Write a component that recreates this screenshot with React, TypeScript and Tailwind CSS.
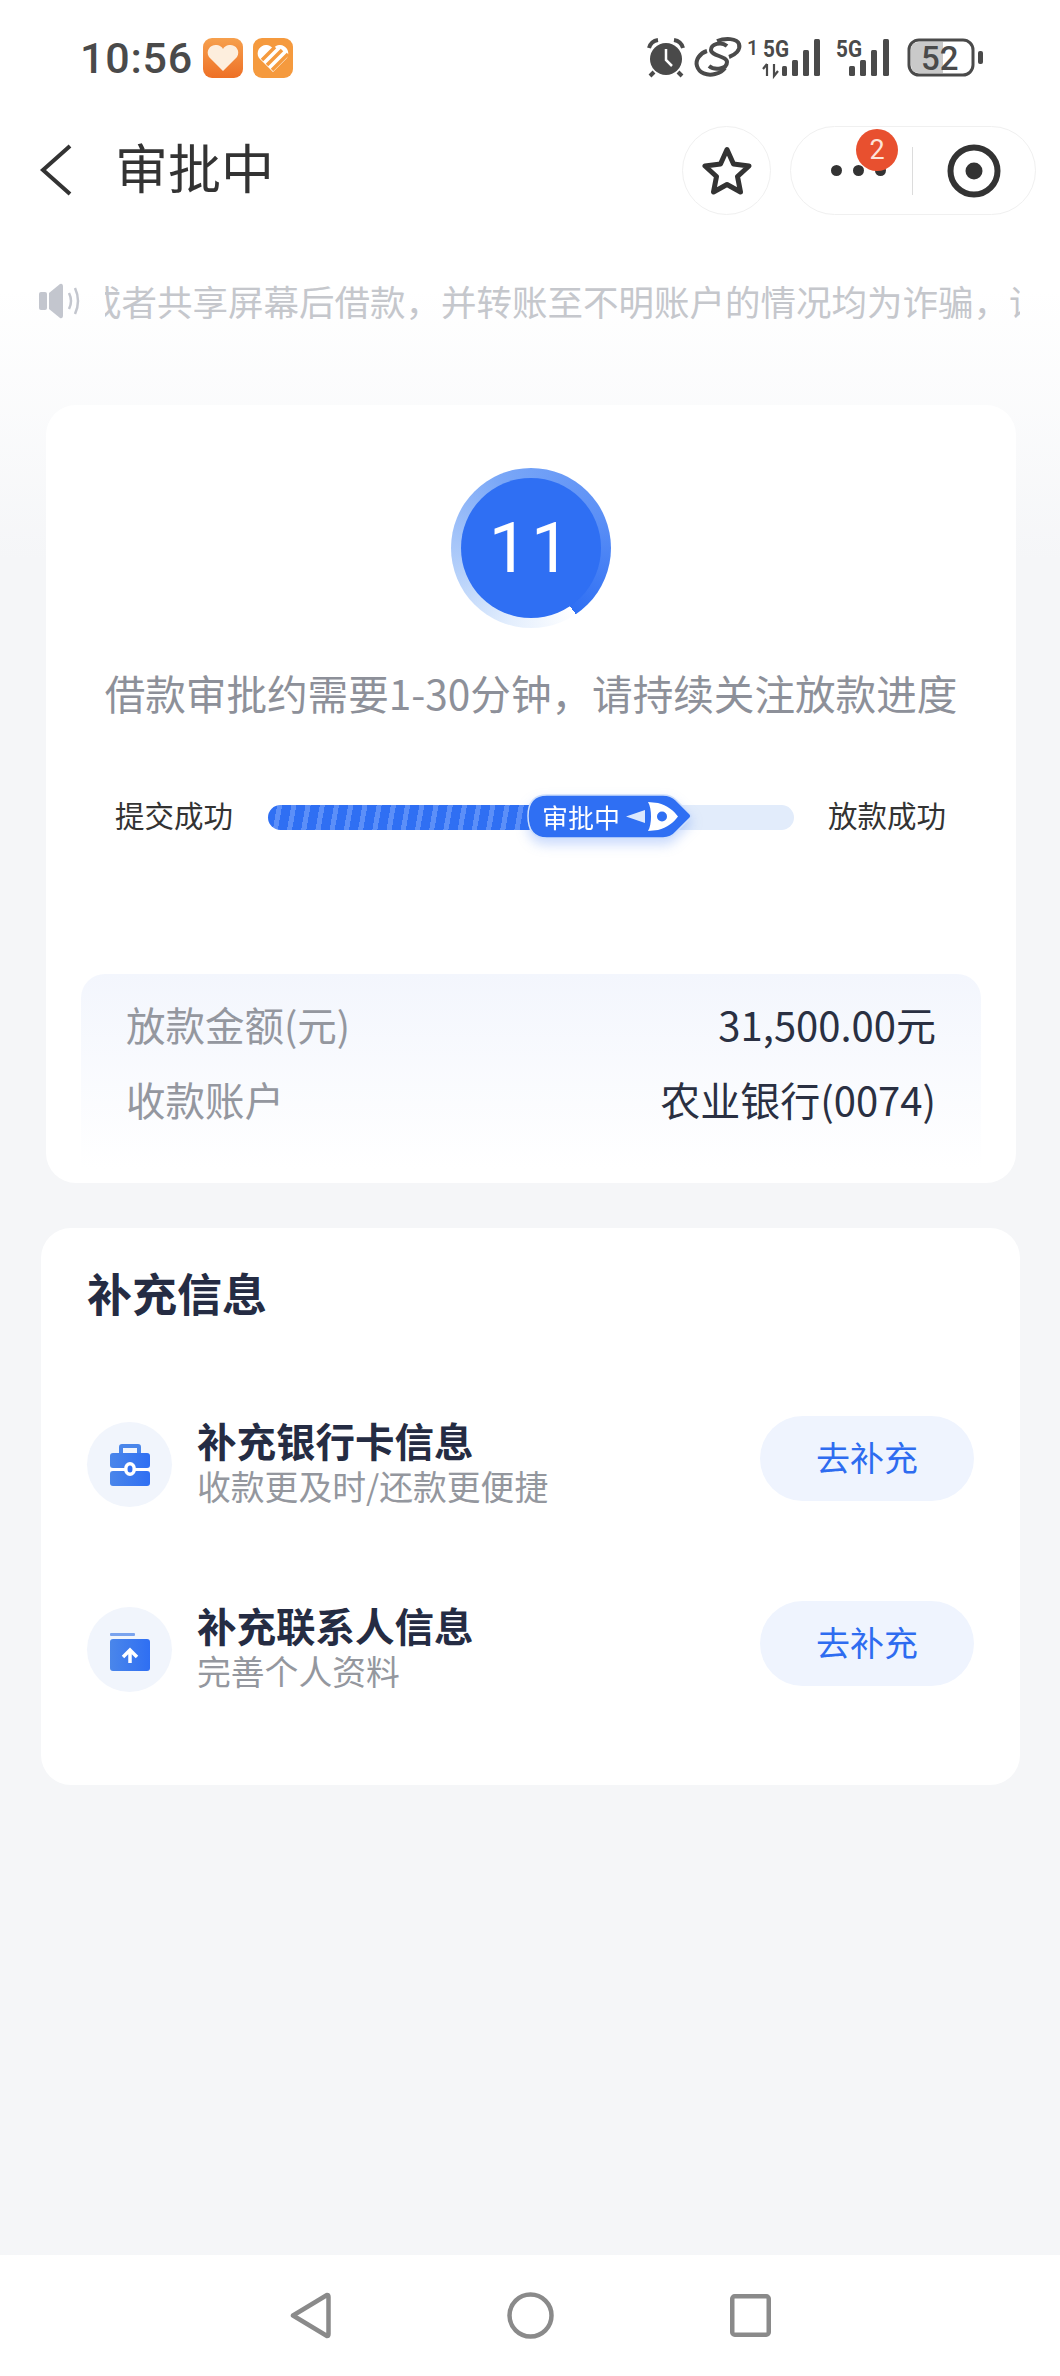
const CJK = "font-['Noto_Sans_CJK_SC','Noto_Sans',sans-serif]";

function HeartIcons() {
  return (
    <div className="flex gap-[10px] ml-[10px] mt-[2px]">
      <svg width="40" height="40" viewBox="0 0 40 40">
        <defs>
          <linearGradient id="o1" x1="0" y1="0" x2="0" y2="1"><stop offset="0" stopColor="#f6a04d" /><stop offset="1" stopColor="#ee7026" /></linearGradient>
        </defs>
        <rect width="40" height="40" rx="9" fill="url(#o1)" />
        <path d="M20 33 L6 19 C2 12 8 6 14 7 C17 7.500 19 9 20 11 C21 9 23 7.500 26 7 C32 6 38 12 34 19 Z" fill="#fdeedd" />
      </svg>
      <svg width="40" height="40" viewBox="0 0 40 40">
        <rect width="40" height="40" rx="9" fill="#f59a3e" />
        <path d="M20 34 L6 20 C2 13 8 6 14 7 C17 7.500 19 9 20 11 C21 9 23 7.500 26 7 C32 6 38 13 34 20 Z" fill="#fff" />
        <path d="M9 22 L22 9 M14 27 L29 12 M19 32 L35 16" stroke="#f59a3e" strokeWidth="3.500" />
      </svg>
    </div>
  );
}

function StatusIcons() {
  const c = "#4a4a4a";
  return (
    <svg width="340" height="44" viewBox="0 0 340 44" className="absolute left-[645px] top-[36px]">
      <circle cx="21" cy="23" r="16" fill={c} />
      <path d="M21 13 V24 L27 30" stroke="#fff" strokeWidth="2.500" fill="none" />
      <path d="M4 12 Q6 5 13 4 M38 12 Q36 5 29 4" stroke={c} strokeWidth="4" fill="none" />
      <path d="M9 36 L5 40 M33 36 L37 40" stroke={c} strokeWidth="4" />
      <path d="M82 10 C76 5 66 8 66 14 C66 20 82 20 82 26 C82 33 70 35 64 30" stroke={c} strokeWidth="4" fill="none" />
      <path d="M72 5 C80 2 92 2 94 8 C96 14 90 19 84 21" stroke={c} strokeWidth="4" fill="none" />
      <path d="M62 15 C55 17 50 24 52 30 C54 37 62 40 70 38 C74 37 78 35 80 32" stroke={c} strokeWidth="4" fill="none" />
      <text x="102" y="19" fontSize="20" fontWeight="500" fill={c} fontFamily="Roboto, sans-serif">1</text>
      <text x="118" y="21" fontSize="23" fontWeight="700" fill={c} fontFamily="Roboto, sans-serif" textLength="26" lengthAdjust="spacingAndGlyphs">5G</text>
      <path d="M122 28 V40 M118 33 L122 28 M129 28 V40 L133 35" stroke={c} strokeWidth="2.200" fill="none" />
      <rect x="137" y="30" width="5" height="10" rx="1.500" fill={c} />
      <rect x="147" y="24" width="6" height="16" rx="1.500" fill={c} />
      <rect x="158" y="14" width="6" height="26" rx="1.500" fill={c} />
      <rect x="169" y="3" width="6" height="37" rx="1.500" fill={c} />
      <text x="191" y="21" fontSize="23" fontWeight="700" fill={c} fontFamily="Roboto, sans-serif" textLength="26" lengthAdjust="spacingAndGlyphs">5G</text>
      <rect x="204" y="30" width="6" height="10" rx="1.500" fill={c} />
      <rect x="215" y="24" width="6" height="16" rx="1.500" fill={c} />
      <rect x="226" y="14" width="6" height="26" rx="1.500" fill={c} />
      <rect x="238" y="3" width="6" height="37" rx="1.500" fill={c} />
      <rect x="264" y="4" width="64" height="35" rx="10" fill="none" stroke={c} strokeWidth="3" />
      <path d="M266 14 Q266 6 274 6 H298 V37 H274 Q266 37 266 29 Z" fill="#c9c9c9" />
      <text x="276" y="34" fontSize="33" fontWeight="500" fill={c} fontFamily="Roboto, sans-serif">52</text>
      <rect x="333" y="15" width="5" height="13" rx="2" fill={c} />
    </svg>
  );
}

function Ring() {
  return (
    <div className="w-[160px] h-[160px] rounded-full bg-[conic-gradient(from_146deg,#ffffff_0deg,#e3eefd_50deg,#b9d3fa_100deg,#7aa7f7_190deg,#5c90f6_280deg,#2f6ff3_360deg)] flex items-center justify-center">
      <div className="w-[140px] h-[140px] rounded-full bg-[#2f6ff3] flex items-center justify-center text-white text-[70px] leading-none tracking-[3px] font-['Roboto',sans-serif]">
        11
      </div>
    </div>
  );
}

function Pill() {
  return (
    <div className="absolute left-[259px] top-[-11px] w-[166px] h-[45px] drop-shadow-[0_6px_6px_rgba(47,111,243,0.25)]">
      <svg width="166" height="45" viewBox="0 0 166 45" className="absolute inset-0">
        <path d="M20 1 H136 Q144 1 149 6 L163 20 Q165 22 163 24 L149 38 Q144 44 136 44 H20 Q1 44 1 22 Q1 1 20 1 Z" fill="#2f6ff3" stroke="#cfe0fc" strokeWidth="1.500" />
        <path d="M99 22.500 L118 16 V29 Z" fill="#dce8fd" />
        <path d="M121 8 L131 9 C140 11 147 17 151 22.500 C147 28 140 34 131 36 L121 37 C125 31 125 14 121 8 Z" fill="#fff" />
        <circle cx="135" cy="22.500" r="5" fill="#2f6ff3" />
      </svg>
      <span className={`absolute left-[15px] top-0 h-[45px] flex items-center text-white text-[26px] ${CJK}`}>审批中</span>
    </div>
  );
}

function Row({ title, sub, icon, className }: { title: string; sub: string; icon: React.ReactNode; className?: string }) {
  return (
    <div className={`flex items-center ${className ?? ""}`}>
      <div className="w-[85px] h-[85px] rounded-full bg-[#f1f5fc] flex items-center justify-center shrink-0">{icon}</div>
      <div className="ml-[25px] flex flex-col flex-1 mt-[-5px]">
        <div className="text-[39.500px] leading-[44px] font-bold text-[#252c43]">{title}</div>
        <div className="text-[33.800px] leading-[40px] text-[#94979e] mt-[4px]">{sub}</div>
      </div>
      <div className="w-[214px] h-[85px] rounded-full bg-[#eff4fe] text-[#2e6cf0] text-[34px] flex items-center justify-center mt-[-12px] pb-[4px]">
        去补充
      </div>
    </div>
  );
}

export default function App() {
  return (
    <div className={`relative w-[1060px] h-[2376px] overflow-hidden flex flex-col bg-[linear-gradient(#ffffff_0,#ffffff_290px,#f5f6f8_560px)] ${CJK}`}>
      {/* status bar */}
      <div className="h-[126px] flex items-start pl-[80px] pt-[36px] shrink-0">
        <span className="text-[43px] leading-[44px] font-medium text-[#4a4a4a] font-['Roboto',sans-serif] tracking-[0.8px]">10:56</span>
        <HeartIcons />
        <StatusIcons />
      </div>

      {/* header */}
      <div className="h-[89px] flex items-center shrink-0">
        <svg width="34" height="54" viewBox="0 0 34 54" className="ml-[39px] mt-[-2px]">
          <path d="M31 3 L4 27 L31 51" stroke="#333" strokeWidth="4" fill="none" />
        </svg>
        <div className="ml-[42px] mt-[-8px] text-[53px] leading-none text-[#333]">审批中</div>
        <div className="ml-auto mr-[19px] w-[89px] h-[89px] rounded-full border border-[#f0f0f0] bg-white flex items-center justify-center">
          <svg width="50" height="50" viewBox="0 0 50 50">
            <path d="M25 3.500 L31.500 18 L47 20 L35.500 30.500 L38.500 46 L25 38.500 L11.500 46 L14.500 30.500 L3 20 L18.500 18 Z" stroke="#333" strokeWidth="5" strokeLinejoin="round" fill="none" />
          </svg>
        </div>
        <div className="relative mr-[24px] w-[246px] h-[89px] rounded-full border border-[#f0f0f0] bg-white flex items-center">
          <div className="ml-[40px] flex gap-[11px]">
            <span className="w-[11px] h-[11px] rounded-full bg-[#333]" />
            <span className="w-[11px] h-[11px] rounded-full bg-[#333]" />
            <span className="w-[11px] h-[11px] rounded-full bg-[#333]" />
          </div>
          <div className="ml-[26px] w-px h-[48px] bg-[#dcdcdc]" />
          <svg width="54" height="54" viewBox="0 0 54 54" className="ml-[34px]">
            <circle cx="27" cy="27" r="23.500" stroke="#333" strokeWidth="6" fill="none" />
            <circle cx="27" cy="27" r="8.500" fill="#333" />
          </svg>
          <div className="absolute left-[65px] top-[2px] w-[42px] h-[42px] rounded-full bg-[#e8502f] text-[#fde3d8] text-[27px] flex items-center justify-center font-['Roboto',sans-serif]">2</div>
        </div>
      </div>

      {/* ticker */}
      <div className="mt-[66px] h-[40px] flex items-center shrink-0">
        <svg width="44" height="36" viewBox="0 0 44 36" className="ml-[39px] shrink-0">
          <rect x="0" y="9" width="8" height="18" rx="2" fill="#c3c6ce" />
          <path d="M10 10 L21 1 Q24 0 24 4 V32 Q24 36 21 35 L10 26 Z" fill="#c3c6ce" />
          <path d="M30 10 Q34 18 30 26 M36 5 Q42 18 36 31" stroke="#c3c6ce" strokeWidth="2.500" fill="none" />
        </svg>
        <div className="ml-[22px] w-[915px] overflow-hidden">
          <div className="ml-[-19px] whitespace-nowrap text-[35.500px] leading-[40px] text-[#c5c7cc]">{"或者共享屏幕后借款\uFF0C并转账至不明账户的情况均为诈骗\uFF0C请"}</div>
        </div>
      </div>

      {/* main card */}
      <div className="mt-[84px] ml-[46px] w-[970px] h-[778px] rounded-[30px] bg-white flex flex-col items-center shrink-0">
        <div className="mt-[63px]"><Ring /></div>
        <div className="mt-[37px] text-[40.600px] leading-[56px] text-[#8d9099]">{"借款审批约需要1-30分钟\uFF0C请持续关注放款进度"}</div>
        <div className="mt-[83px] w-full flex items-center h-[26px]">
          <span className="ml-[69px] w-[118px] mt-[-5px] whitespace-nowrap text-[29.500px] text-[#333]">提交成功</span>
          <div className="relative ml-[35px] w-[526px] h-[25px] rounded-full bg-[#e2ecfb]">
            <div className="w-[280px] h-[25px] rounded-l-full bg-[repeating-linear-gradient(100deg,#2f6ff3_0,#2f6ff3_9px,#5c8ff8_9px,#5c8ff8_14px)]" />
            <Pill />
          </div>
          <span className="ml-[34px] mt-[-5px] whitespace-nowrap text-[29.500px] text-[#333]">放款成功</span>
        </div>
        <div className="mt-[144px] w-[900px] h-[195px] rounded-t-[24px] bg-[linear-gradient(#f3f6fd,#ffffff)] pl-[45px] pr-[45px] pt-[20px]">
          <div className="flex justify-between items-center h-[60px] text-[39.500px]">
            <span className="text-[#94979f]">放款金额(元)</span>
            <span className="text-[#2a3042] text-[40px]">31,500.00元</span>
          </div>
          <div className="flex justify-between items-center h-[60px] mt-[15px] text-[39.500px]">
            <span className="text-[#94979f]">收款账户</span>
            <span className="text-[#2a3042] text-[40px]">农业银行(0074)</span>
          </div>
        </div>
      </div>

      {/* secondary card */}
      <div className="mt-[45px] ml-[41px] w-[979px] h-[557px] rounded-[30px] bg-white px-[46px] pt-[35px] shrink-0">
        <div className="text-[45px] leading-[60px] font-bold text-[#252c43]">补充信息</div>
        <Row
          className="mt-[99px]"
          title="补充银行卡信息"
          sub="收款更及时/还款更便捷"
          icon={
            <svg width="40" height="42" viewBox="0 0 40 42">
              <defs><linearGradient id="b1" x1="0" y1="0" x2="1" y2="0"><stop offset="0" stopColor="#4a86ea" /><stop offset="1" stopColor="#2f6ff3" /></linearGradient></defs>
              <path d="M9 9 V3 Q9 0 12 0 H28 Q31 0 31 3 V9 H27 V4 H13 V9 Z" fill="#4a86ea" />
              <rect x="0" y="9" width="40" height="15" rx="3" fill="url(#b1)" />
              <rect x="0" y="27" width="40" height="15" rx="3" fill="url(#b1)" />
              <rect x="0" y="24" width="40" height="3" fill="#fff" />
              <ellipse cx="20" cy="25" rx="6" ry="7" fill="#fff" />
              <ellipse cx="20" cy="25" rx="2.500" ry="3.500" fill="#2f6ff3" />
            </svg>
          }
        />
        <Row
          className="mt-[100px]"
          title="补充联系人信息"
          sub="完善个人资料"
          icon={
            <svg width="40" height="38" viewBox="0 0 40 38" className="mt-[4px]">
              <defs><linearGradient id="b2" x1="0" y1="0" x2="1" y2="0"><stop offset="0" stopColor="#4a86ea" /><stop offset="1" stopColor="#2f6ff3" /></linearGradient></defs>
              <rect x="0" y="0" width="25" height="3" rx="1" fill="#7aa3ee" />
              <rect x="0" y="6" width="40" height="32" rx="3" fill="url(#b2)" />
              <path d="M20 30 V18 M13 24 L20 17 L27 24" stroke="#fff" strokeWidth="3.500" fill="none" />
            </svg>
          }
        />
      </div>

      {/* nav */}
      <div className="mt-auto h-[121px] bg-white flex items-center justify-between pl-[290px] pr-[289px] shrink-0">
        <svg width="41" height="47" viewBox="0 0 41 47">
          <path d="M3 23.500 L37 3 Q38.500 3 38.500 5 V42 Q38.500 44 37 44 Z" stroke="#8a8a8a" strokeWidth="4.500" strokeLinejoin="round" fill="none" />
        </svg>
        <svg width="47" height="47" viewBox="0 0 47 47">
          <circle cx="23.500" cy="23.500" r="21" stroke="#8a8a8a" strokeWidth="4.500" fill="none" />
        </svg>
        <svg width="41" height="43" viewBox="0 0 41 43">
          <rect x="2.250" y="2.250" width="36.500" height="38.500" rx="2.500" stroke="#8a8a8a" strokeWidth="4.500" fill="none" />
        </svg>
      </div>
    </div>
  );
}
